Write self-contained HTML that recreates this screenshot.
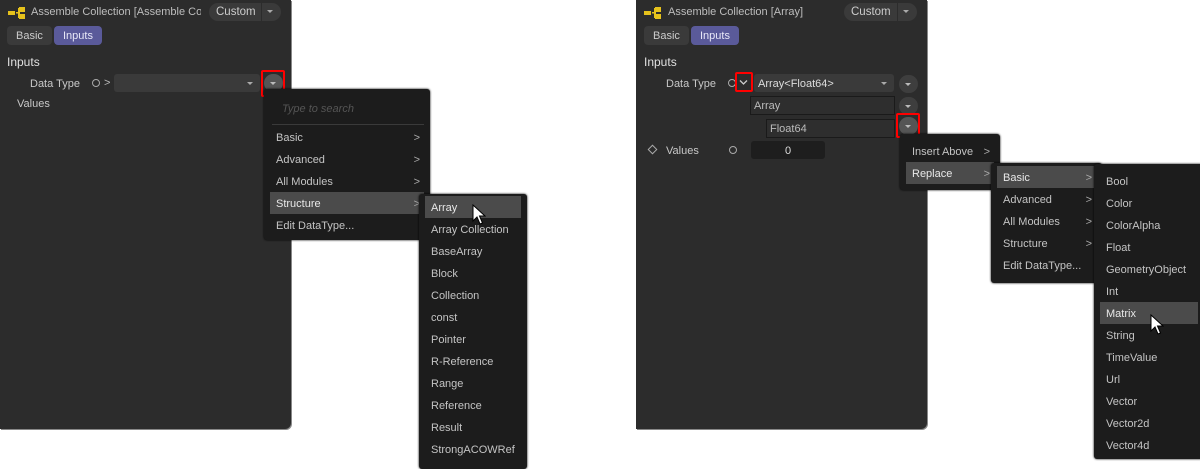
<!DOCTYPE html>
<html><head><style>
*{margin:0;padding:0;box-sizing:border-box}
body{width:1200px;height:462px;background:#fff;position:relative;overflow:hidden;font-family:"Liberation Sans",sans-serif;font-size:11px;color:#c8c8c8}
.a{position:absolute;white-space:nowrap}
.panel{position:absolute;top:0;width:291px;height:429px;background:#2c2c2c;border-bottom-right-radius:6px;box-shadow:1px 1px 0 #888}
.menu{position:absolute;background:#1c1c1c;border-radius:3px;box-shadow:0 0 2px #000}
.it{position:absolute;left:6px;right:6px;height:22px;line-height:24px;padding-left:6px;color:#c4c4c4}
.it.h{background:#4b4b4b;color:#e8e8e8}
.it .ar{position:absolute;right:4px;top:0;color:#aaa}
.tab{position:absolute;top:26px;height:19px;line-height:21px;border-radius:4px;padding:0 9px;font-size:11px}
.dd{position:absolute;width:19px;height:18px;border-radius:9px;background:#3e3e3e}
.dd:after{content:"";position:absolute;left:6px;top:8px;border-left:3.5px solid transparent;border-right:3.5px solid transparent;border-top:3.5px solid #bbb}
.red{position:absolute;border:2px solid #f00;border-radius:2px}
.logo{position:absolute;top:7px}
</style></head><body>

<!-- LEFT PANEL -->
<div class="panel" style="left:0"></div>
<svg class="logo" style="left:8px" width="18" height="12"><rect x="0" y="4" width="7" height="4" fill="#e6c21c"/><rect x="8" y="5" width="3" height="1.5" fill="#e6c21c"/><rect x="10" y="1" width="2" height="10" fill="#e6c21c"/><rect x="11" y="0" width="6" height="5" fill="#e6c21c"/><rect x="11" y="7" width="6" height="5" fill="#e6c21c"/></svg>
<div class="a" style="left:31px;top:6px;width:170px;overflow:hidden;color:#bdbdbd;font-size:11px">Assemble Collection [Assemble Col</div>
<div class="a" style="left:209px;top:3px;width:72px;height:18px;border-radius:9px;background:#3a3a3a"></div>
<div class="a" style="left:216px;top:6px;color:#ccc;font-size:11.5px">Custom</div>
<div class="a" style="left:261px;top:3px;width:1px;height:18px;background:#2c2c2c"></div>
<div class="a" style="left:267px;top:10px;border-left:3.5px solid transparent;border-right:3.5px solid transparent;border-top:3.5px solid #aaa"></div>
<div class="tab" style="left:7px;background:#3a3a3a;color:#ccc">Basic</div>
<div class="tab" style="left:54px;background:#5a5a9a;color:#e8e8f8">Inputs</div>
<div class="a" style="left:7px;top:55px;color:#e0e0e0;font-size:12px">Inputs</div>
<div class="a" style="left:30px;top:78px">Data Type</div>
<div class="a" style="left:92px;top:79px;width:8px;height:8px;border:1.3px solid #aaa;border-radius:50%"></div>
<div class="a" style="left:104px;top:77px;color:#bbb">&gt;</div>
<div class="a" style="left:114px;top:74px;width:146px;height:18px;border-radius:3px;background:#3a3a3a"></div>
<div class="a" style="left:247px;top:82px;border-left:3.5px solid transparent;border-right:3.5px solid transparent;border-top:3.5px solid #aaa"></div>
<div class="dd" style="left:264px;top:74px;background:#555"></div>
<div class="red" style="left:261px;top:70px;width:24px;height:27px"></div>
<div class="a" style="left:17px;top:98px">Values</div>

<div class="menu" style="left:264px;top:89px;width:166px;height:151px">
 <div class="a" style="left:18px;top:14px;color:#555;font-style:italic">Type to search</div>
 <div class="a" style="left:8px;top:35px;width:152px;height:1px;background:#3a3a3a"></div>
 <div class="it" style="top:37px">Basic<span class="ar">&gt;</span></div>
 <div class="it" style="top:59px">Advanced<span class="ar">&gt;</span></div>
 <div class="it" style="top:81px">All Modules<span class="ar">&gt;</span></div>
 <div class="it h" style="top:103px">Structure<span class="ar">&gt;</span></div>
 <div class="it" style="top:125px">Edit DataType...</div>
</div>
<div class="menu" style="left:419px;top:194px;width:108px;height:275px">
 <div class="it h" style="top:2px">Array</div>
 <div class="it" style="top:24px">Array Collection</div>
 <div class="it" style="top:46px">BaseArray</div>
 <div class="it" style="top:68px">Block</div>
 <div class="it" style="top:90px">Collection</div>
 <div class="it" style="top:112px">const</div>
 <div class="it" style="top:134px">Pointer</div>
 <div class="it" style="top:156px">R-Reference</div>
 <div class="it" style="top:178px">Range</div>
 <div class="it" style="top:200px">Reference</div>
 <div class="it" style="top:222px">Result</div>
 <div class="it" style="top:244px">StrongACOWRef</div>
</div>
<svg class="a" style="left:472px;top:204px" width="14" height="22"><path d="M1 1 L1 17 L5 13 L8 20 L10.5 19 L7.5 12 L13 12 Z" fill="#fff" stroke="#000" stroke-width="1"/></svg>

<!-- RIGHT PANEL -->
<div class="panel" style="left:636px"></div>
<svg class="logo" style="left:644px" width="18" height="12"><rect x="0" y="4" width="7" height="4" fill="#e6c21c"/><rect x="8" y="5" width="3" height="1.5" fill="#e6c21c"/><rect x="10" y="1" width="2" height="10" fill="#e6c21c"/><rect x="11" y="0" width="6" height="5" fill="#e6c21c"/><rect x="11" y="7" width="6" height="5" fill="#e6c21c"/></svg>
<div class="a" style="left:668px;top:6px;color:#bdbdbd;font-size:11px">Assemble Collection [Array]</div>
<div class="a" style="left:844px;top:3px;width:73px;height:18px;border-radius:9px;background:#3a3a3a"></div>
<div class="a" style="left:851px;top:6px;color:#ccc;font-size:11.5px">Custom</div>
<div class="a" style="left:897px;top:3px;width:1px;height:18px;background:#2c2c2c"></div>
<div class="a" style="left:903px;top:10px;border-left:3.5px solid transparent;border-right:3.5px solid transparent;border-top:3.5px solid #aaa"></div>
<div class="tab" style="left:644px;background:#3a3a3a;color:#ccc">Basic</div>
<div class="tab" style="left:691px;background:#5a5a9a;color:#e8e8f8">Inputs</div>
<div class="a" style="left:644px;top:55px;color:#e0e0e0;font-size:12px">Inputs</div>
<div class="a" style="left:666px;top:78px">Data Type</div>
<div class="a" style="left:728px;top:79px;width:8px;height:8px;border:1.3px solid #aaa;border-radius:50%"></div>
<svg class="a" style="left:739px;top:79px" width="9" height="7"><path d="M1 1.5 L4.5 5 L8 1.5" fill="none" stroke="#ccc" stroke-width="1.3"/></svg>
<div class="red" style="left:735px;top:72px;width:18px;height:20px"></div>
<div class="a" style="left:754px;top:74px;width:140px;height:18px;border-radius:3px;background:#3a3a3a"></div>
<div class="a" style="left:758px;top:78px;color:#ddd">Array&lt;Float64&gt;</div>
<div class="a" style="left:881px;top:82px;border-left:3.5px solid transparent;border-right:3.5px solid transparent;border-top:3.5px solid #aaa"></div>
<div class="dd" style="left:899px;top:75px"></div>
<div class="a" style="left:750px;top:96px;width:145px;height:19px;border:1px solid #1a1a1a;background:#2e2e2e"></div>
<div class="a" style="left:754px;top:100px;color:#bbb">Array</div>
<div class="dd" style="left:899px;top:97px"></div>
<div class="a" style="left:766px;top:119px;width:129px;height:19px;border:1px solid #1a1a1a;background:#2e2e2e"></div>
<div class="a" style="left:770px;top:123px;color:#bbb">Float64</div>
<div class="dd" style="left:899px;top:117px;background:#555"></div>
<div class="red" style="left:896px;top:113px;width:24px;height:25px"></div>
<div class="a" style="left:649px;top:146px;width:7px;height:7px;border:1.3px solid #aaa;transform:rotate(45deg)"></div>
<div class="a" style="left:666px;top:145px">Values</div>
<div class="a" style="left:729px;top:146px;width:8px;height:8px;border:1.3px solid #aaa;border-radius:50%"></div>
<div class="a" style="left:751px;top:141px;width:74px;height:18px;border-radius:3px;background:#1e1e1e;color:#ddd;text-align:center;line-height:20px">0</div>

<div class="menu" style="left:900px;top:134px;width:100px;height:56px">
 <div class="it" style="top:6px">Insert Above<span class="ar">&gt;</span></div>
 <div class="it h" style="top:28px">Replace<span class="ar">&gt;</span></div>
</div>
<div class="menu" style="left:991px;top:163px;width:111px;height:120px">
 <div class="it h" style="top:3px">Basic<span class="ar">&gt;</span></div>
 <div class="it" style="top:25px">Advanced<span class="ar">&gt;</span></div>
 <div class="it" style="top:47px">All Modules<span class="ar">&gt;</span></div>
 <div class="it" style="top:69px">Structure<span class="ar">&gt;</span></div>
 <div class="it" style="top:91px">Edit DataType...</div>
</div>
<div class="menu" style="left:1094px;top:164px;width:110px;height:295px">
 <div class="it" style="top:6px">Bool</div>
 <div class="it" style="top:28px">Color</div>
 <div class="it" style="top:50px">ColorAlpha</div>
 <div class="it" style="top:72px">Float</div>
 <div class="it" style="top:94px">GeometryObject</div>
 <div class="it" style="top:116px">Int</div>
 <div class="it h" style="top:138px">Matrix</div>
 <div class="it" style="top:160px">String</div>
 <div class="it" style="top:182px">TimeValue</div>
 <div class="it" style="top:204px">Url</div>
 <div class="it" style="top:226px">Vector</div>
 <div class="it" style="top:248px">Vector2d</div>
 <div class="it" style="top:270px">Vector4d</div>
</div>
<svg class="a" style="left:1150px;top:314px" width="14" height="22"><path d="M1 1 L1 17 L5 13 L8 20 L10.5 19 L7.5 12 L13 12 Z" fill="#fff" stroke="#000" stroke-width="1"/></svg>
</body></html>
